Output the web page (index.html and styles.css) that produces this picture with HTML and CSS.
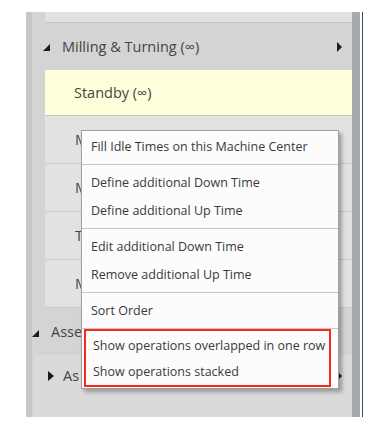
FILE: index.html
```
<!DOCTYPE html>
<html lang="en">
<head>
    <meta charset="UTF-8">
    <meta name="viewport" content="width=device-width, initial-scale=1.0">
    <title>Machine Centers</title>
    <link rel="stylesheet" href="styles.css">
</head>
<body>
    <div class="frame">
        <div class="pane">
            <div class="prev-group">
                <div class="prev-row"></div>
            </div>
            <div class="group-head level2">
                <span class="tri-open"></span>
                <span class="label">Milling &amp; Turning (&infin;)</span>
                <span class="tri-right"></span>
            </div>
            <div class="group-body level2">
                <div class="row standby">Standby (&infin;)</div>
                <div class="row">M</div>
                <div class="row">M</div>
                <div class="row">T</div>
                <div class="row">M</div>
            </div>
            <div class="group-head level1">
                <span class="tri-open"></span>
                <span class="label">Asse</span>
            </div>
            <div class="group-body level1">
                <div class="sub-head">
                    <span class="tri-closed"></span>
                    <span class="label">As</span>
                    <span class="tri-right"></span>
                </div>
            </div>
        </div>
        <div class="scrollbar"></div>
        <div class="edge"></div>
    </div>

    <div class="menu">
        <div class="item">Fill Idle Times on this Machine Center</div>
        <div class="sep"></div>
        <div class="item">Define additional Down Time</div>
        <div class="item">Define additional Up Time</div>
        <div class="sep"></div>
        <div class="item">Edit additional Down Time</div>
        <div class="item">Remove additional Up Time</div>
        <div class="sep"></div>
        <div class="item">Sort Order</div>
        <div class="sep last-sep"></div>
        <div class="highlight">
            <div class="item">Show operations overlapped in one row</div>
            <div class="item">Show operations stacked</div>
        </div>
    </div>
</body>
</html>
```
FILE: styles.css
```
body {
    margin: 0;
    padding: 0;
    background-color: #fff;
    font-family: "Open Sans", "Noto Sans", sans-serif;
    color: #444;
}
.frame {
    display: flex;
    margin: 12px 0 0 26px;
    height: 405px;
    width: 337px;
}
.pane {
    flex: 1;
    display: flex;
    flex-direction: column;
    background-color: #d4d4d4;
    border-left: 6px solid #c8c8c8;
    overflow: hidden;
}
.prev-group {
    padding-left: 13px;
}
.prev-row {
    height: 10px;
    background-color: #e1e1e1;
    border-bottom: 1px solid #c6c6c6;
}
.group-head {
    display: flex;
    align-items: center;
    height: 47px;
    font-size: 14.5px;
    flex-shrink: 0;
}
.group-head.level2 {
    padding-left: 11px;
}
.group-head.level1 {
    padding-left: 0;
}
.group-head .label {
    flex: 1;
}
.tri-open {
    width: 0;
    height: 0;
    border-left: 7px solid transparent;
    border-bottom: 7px solid #1c1c1c;
    margin: 2px 12px 0 0;
}
.group-head.level1 .tri-open {
    margin: 4px 12px 0 0;
}
.tri-right {
    width: 0;
    height: 0;
    border-top: 5px solid transparent;
    border-bottom: 5px solid transparent;
    border-left: 5px solid #1c1c1c;
    margin-right: 10px;
}
.tri-closed {
    width: 0;
    height: 0;
    border-top: 5px solid transparent;
    border-bottom: 5px solid transparent;
    border-left: 6px solid #1c1c1c;
    margin-right: 9px;
}
.group-body.level2 {
    padding-left: 13px;
}
.group-body.level1 {
    flex: 1;
    padding-left: 2px;
}
.row {
    height: 47px;
    display: flex;
    align-items: center;
    padding-left: 30px;
    font-size: 14.5px;
    background-color: #e2e2e2;
    border-bottom: 1px solid #c9c9c9;
}
.row.standby {
    height: 45px;
    background-color: #ffffdc;
    padding-left: 29px;
}
.sub-head {
    display: flex;
    align-items: flex-start;
    height: 100%;
    padding: 16px 0 0 14px;
    background-color: #dadada;
    font-size: 14.5px;
    box-sizing: border-box;
}
.sub-head .label {
    flex: 1;
    margin-top: -5px;
}
.scrollbar {
    width: 8px;
    background-color: #a9a9a9;
}
.edge {
    width: 1px;
    margin-left: 2px;
    background-color: #2e4d6b;
}
.menu {
    position: absolute;
    left: 81px;
    top: 130px;
    width: 256px;
    padding: 2px 0 1px;
    background-color: #fcfcfc;
    border: 1px solid #a0a0a0;
    box-shadow: 3px 3px 4px rgba(0, 0, 0, 0.3);
    font-size: 12.5px;
    color: #3a3a3a;
}
.item {
    height: 28px;
    line-height: 28px;
    padding-left: 9px;
    white-space: nowrap;
}
.sep {
    height: 1px;
    background-color: #c8c8c8;
    margin: 3px 0 4px;
}
.last-sep {
    margin-bottom: 0;
}
.highlight {
    margin: 0 7px 0 2px;
    border: 2px solid #f42a1a;
    padding: 2px 0 0;
}
.highlight .item {
    padding-left: 7px;
    height: 26px;
    line-height: 26px;
}
```
